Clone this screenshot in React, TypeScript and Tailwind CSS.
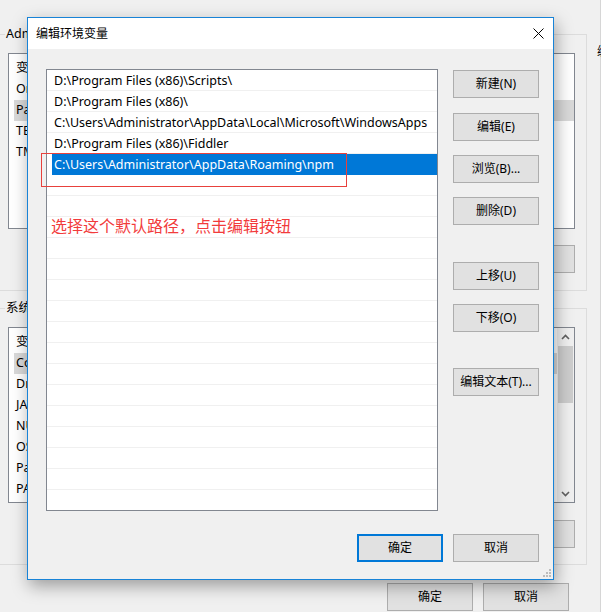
import React from "react";

const paths = [
  "D:\\Program Files (x86)\\Scripts\\",
  "D:\\Program Files (x86)\\",
  "C:\\Users\\Administrator\\AppData\\Local\\Microsoft\\WindowsApps",
  "D:\\Program Files (x86)\\Fiddler",
  "C:\\Users\\Administrator\\AppData\\Roaming\\npm",
];

const userVars = ["OneDrive", "Path", "TEMP", "TMP"];
const sysVars = ["ComSpec", "DriverData", "JAVA_HOME", "NUMBER_OF_PROCESSORS", "OS", "Path", "PATHEXT"];

function Btn({ label, className = "", primary = false }: { label: string; className?: string; primary?: boolean }) {
  return (
    <div
      className={`w-[86px] h-[28px] flex items-center justify-center text-[12px] text-black bg-[#e1e1e1] ${
        primary ? "border-2 border-[#0078d7]" : "border border-[#adadad]"
      } ${className}`}
    >
      {label}
    </div>
  );
}

// 背后的“环境变量”窗口里的列表
function VarList({ items, active, scroll }: { items: string[]; active: number; scroll?: boolean }) {
  return (
    <div className="h-[176px] border border-[#828790] bg-white flex">
      <div className="flex-1 pt-[3px]">
        <div className="h-[22px] flex items-center pl-[7px] text-[12.5px]">变量</div>
        {items.map((v, i) => (
          <div
            key={v}
            className={`h-[21px] flex items-center ml-[5px] pl-[2px] text-[12.5px] ${i === active ? "bg-[#d9d9d9]" : ""}`}
          >
            {v}
          </div>
        ))}
      </div>
      {scroll && (
        <div className="w-[17px] flex flex-col items-center bg-[#f0f0f0]">
          <div className="h-[17px] flex items-center justify-center">
            <svg width="9" height="6" viewBox="0 0 9 6">
              <path d="M1 5 L4.5 1.5 L8 5" fill="none" stroke="#606060" strokeWidth="1.6" />
            </svg>
          </div>
          <div className="w-[15px] h-[57px] mt-[1px] bg-[#cdcdcd]" />
          <div className="flex-1" />
          <div className="h-[17px] flex items-center justify-center">
            <svg width="9" height="6" viewBox="0 0 9 6">
              <path d="M1 1 L4.5 4.5 L8 1" fill="none" stroke="#606060" strokeWidth="1.6" />
            </svg>
          </div>
        </div>
      )}
    </div>
  );
}

function Group({ label, children, className = "" }: { label: string; children: React.ReactNode; className?: string }) {
  return (
    <div className={`relative border border-[#dcdcdc] pt-[18px] pl-[19px] pr-[11px] ${className}`}>
      <span className="absolute -top-[9px] left-[16px] px-[1px] bg-[#f0f0f0] text-[12.5px] leading-[16px]">{label}</span>
      {children}
    </div>
  );
}

export default function App() {
  const rows = Array.from({ length: 21 }, (_, i) => paths[i] ?? "");

  return (
    <div className="relative w-[601px] h-[612px] overflow-hidden bg-[#f0f0f0] text-black font-['Segoe_UI','Noto_Sans','Noto_Sans_CJK_SC',sans-serif]">
      {/* 背后的环境变量窗口 */}
      <div className="absolute left-[-12px] top-0 w-[599px] pt-[34px]">
        <Group label="Administrator 的用户变量" className="pb-[17px]">
          <VarList items={userVars} active={1} />
          <div className="mt-[16px] flex justify-end gap-[10px]">
            <Btn label="新建(N)..." />
            <Btn label="编辑(E)..." />
            <Btn label="删除(D)" />
          </div>
        </Group>
        <Group label="系统变量" className="mt-[17px] pb-[16px]">
          <VarList items={sysVars} active={0} scroll />
          <div className="mt-[17px] flex justify-end gap-[10px]">
            <Btn label="新建(W)..." />
            <Btn label="编辑(I)..." />
            <Btn label="删除(L)" />
          </div>
        </Group>
        <div className="mt-[18px] pr-[18px] flex justify-end gap-[10px]">
          <Btn label="确定" />
          <Btn label="取消" />
        </div>
      </div>
      <div className="absolute left-[600px] top-0 h-full w-px bg-[#d6d6d6]" />
      <span className="absolute left-[597px] top-[45px] text-[12px] leading-[14px]">编</span>

      {/* 编辑环境变量 对话框 */}
      <div className="absolute left-[27px] top-[17px] w-[527px] h-[563px] border border-[#1883d7] bg-[#f0f0f0] shadow-[2px_6px_16px_rgba(0,0,0,0.35)] flex flex-col">
        <div className="h-[31px] bg-white flex items-center justify-between pl-[8px] pr-[9px]">
          <span className="text-[12px] pt-[1px]">编辑环境变量</span>
          <svg width="11" height="11" viewBox="0 0 11 11">
            <path d="M0.5 0.5 L10.5 10.5 M10.5 0.5 L0.5 10.5" stroke="#000" strokeWidth="1" />
          </svg>
        </div>

        <div className="relative flex-1 flex flex-col pl-[18px] pr-[14px] pt-[20px] pb-[17px]">
          <div className="flex gap-[15px]">
            <div className="w-[392px] h-[442px] border border-[#828790] bg-white overflow-hidden">
              {rows.map((p, i) =>
                i === 4 ? (
                  <div key={i} className="h-[21px] ml-[5px] pl-[2px] pt-[2px] flex items-center bg-[#0078d7] text-white text-[12.5px]">
                    {p}
                  </div>
                ) : (
                  <div key={i} className="h-[21px] border-b border-[#f0f0f0] pl-[7px] pt-[2px] flex items-center text-[12.5px]">
                    {p}
                  </div>
                )
              )}
            </div>
            <div className="flex flex-col pt-[1px]">
              <Btn label="新建(N)" />
              <Btn label="编辑(E)" className="mt-[15px]" />
              <Btn label="浏览(B)..." className="mt-[14px]" />
              <Btn label="删除(D)" className="mt-[14px]" />
              <Btn label="上移(U)" className="mt-[37px]" />
              <Btn label="下移(O)" className="mt-[14px]" />
              <Btn label="编辑文本(T)..." className="mt-[36px]" />
            </div>
          </div>

          <div className="mt-auto flex justify-end gap-[10px]">
            <Btn label="确定" primary />
            <Btn label="取消" />
          </div>

          {/* 截图上的红色标注 */}
          <div className="absolute left-[13px] top-[104px] w-[306px] h-[34px] border border-[#e8413c]" />
          <span className="absolute left-[23px] top-[168px] text-[16px] leading-[16px] text-[#f23b3b] font-['Noto_Sans_CJK_SC',sans-serif]">
            选择这个默认路径，点击编辑按钮
          </span>

          <svg className="absolute right-[2px] bottom-[1px]" width="10" height="9" viewBox="0 0 10 9">
            <rect x="8" y="0" width="2" height="2" fill="#bcbcbc" />
            <rect x="5" y="3" width="2" height="2" fill="#bcbcbc" />
            <rect x="8" y="3" width="2" height="2" fill="#bcbcbc" />
            <rect x="2" y="6" width="2" height="2" fill="#bcbcbc" />
            <rect x="5" y="6" width="2" height="2" fill="#bcbcbc" />
            <rect x="8" y="6" width="2" height="2" fill="#bcbcbc" />
          </svg>
        </div>
      </div>
    </div>
  );
}
